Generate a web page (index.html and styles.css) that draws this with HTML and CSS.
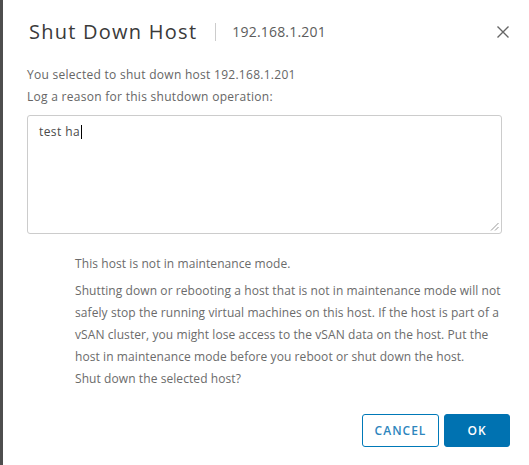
FILE: index.html
```html
<!DOCTYPE html>
<html lang="en">
<head>
<meta charset="utf-8">
<title>Shut Down Host</title>
<link rel="stylesheet" href="styles.css">
</head>
<body>
<div class="page">
  <div class="modal">
    <header class="modal-header">
      <h1 class="title">Shut Down Host</h1>
      <span class="divider"></span>
      <span class="subtitle">192.168.1.201</span>
      <button class="close" aria-label="Close">
        <svg width="12" height="12" viewBox="0 0 12 12"><path d="M0.5 0.5 L11.5 11.5 M11.5 0.5 L0.5 11.5" stroke="#666" stroke-width="1.4" fill="none"/></svg>
      </button>
    </header>
    <div class="modal-body">
      <p class="line">You selected to shut down host 192.168.1.201</p>
      <p class="line">Log a reason for this shutdown operation:</p>
      <div class="textarea">
        <span class="typed">test ha</span><span class="caret"></span>
        <svg class="grip" width="9" height="9" viewBox="0 0 9 9"><path d="M8.5 1 L1 8.5 M8.5 5 L5 8.5" stroke="#999" stroke-width="1" fill="none"/></svg>
      </div>
      <div class="warning">
        <p class="warn-first">This host is not in maintenance mode.</p>
        <p class="warn-main">Shutting down or rebooting a host that is not in maintenance mode will not safely stop the running virtual machines on this host. If the host is part of a vSAN cluster, you might lose access to the vSAN data on the host. Put the host in maintenance mode before you reboot or shut down the host.<br>Shut down the selected host?</p>
      </div>
    </div>
    <footer class="modal-footer">
      <button class="btn btn-outline">CANCEL</button>
      <button class="btn btn-primary">OK</button>
    </footer>
  </div>
</div>
</body>
</html>
```

FILE: styles.css
```css
html, body {
  margin: 0;
  padding: 0;
  background: #ffffff;
}

body {
  font-family: "Open Sans", "Liberation Sans", sans-serif;
  color: #666666;
}

.page {
  width: 529px;
  height: 465px;
  box-sizing: border-box;
  border-left: 3px solid #4e4e4e;
  background: #ffffff;
}

.modal {
  padding: 0 27px 0 24px;
  display: flex;
  flex-direction: column;
}

.modal-header {
  display: flex;
  align-items: center;
  padding-top: 19px;
  height: 25px;
}

.title {
  margin: 0 0 0 2px;
  font-size: 20px;
  font-weight: 400;
  line-height: 24px;
  color: #3a3a3a;
  letter-spacing: 1.25px;
}

.divider {
  width: 1px;
  height: 18px;
  background: #cccccc;
  margin: 0 16px 0 18px;
}

.subtitle {
  font-size: 14px;
  color: #5c5c5c;
  line-height: 24px;
  letter-spacing: 0.2px;
}

.close {
  margin-left: auto;
  margin-right: -7px;
  border: 0;
  background: transparent;
  padding: 0;
  width: 12px;
  height: 12px;
  display: flex;
}

.modal-body {
  padding-top: 20px;
  display: flex;
  flex-direction: column;
}

.line {
  margin: 0;
  font-size: 12px;
  line-height: 22px;
  color: #666666;
  letter-spacing: 0.28px;
}

.textarea {
  position: relative;
  margin-top: 7px;
  border: 1px solid #cccccc;
  border-radius: 3px;
  padding: 8px 11px;
  box-sizing: border-box;
  height: 119px;
  font-size: 12px;
  line-height: 16px;
  color: #4a4a4a;
  letter-spacing: 0.4px;
  display: flex;
  align-items: flex-start;
}

.caret {
  display: inline-block;
  width: 1px;
  height: 14px;
  margin-top: 1px;
  margin-left: 1px;
  background: #000000;
}

.grip {
  position: absolute;
  right: 2px;
  bottom: 2px;
}

.warning {
  margin: 19px 0 0 48px;
  font-size: 12px;
  line-height: 22px;
  color: #6b6b6b;
  letter-spacing: 0.08px;
}

.warning p {
  margin: 0;
}

.warn-first {
  margin-bottom: 5px !important;
}

.modal-footer {
  display: flex;
  justify-content: flex-end;
  gap: 5px;
  margin-top: 24px;
  margin-right: -8px;
}

.btn {
  height: 33px;
  box-sizing: border-box;
  border-radius: 3px;
  font-family: "Open Sans", "Liberation Sans", sans-serif;
  font-size: 12px;
  font-weight: 600;
  letter-spacing: 1px;
  padding: 0;
}

.btn-outline {
  width: 77px;
  background: #ffffff;
  border: 1px solid #0079b8;
  color: #2e86bd;
}

.btn-primary {
  width: 66px;
  background: #0072b1;
  border: 1px solid #0072b1;
  color: #ffffff;
}
```
